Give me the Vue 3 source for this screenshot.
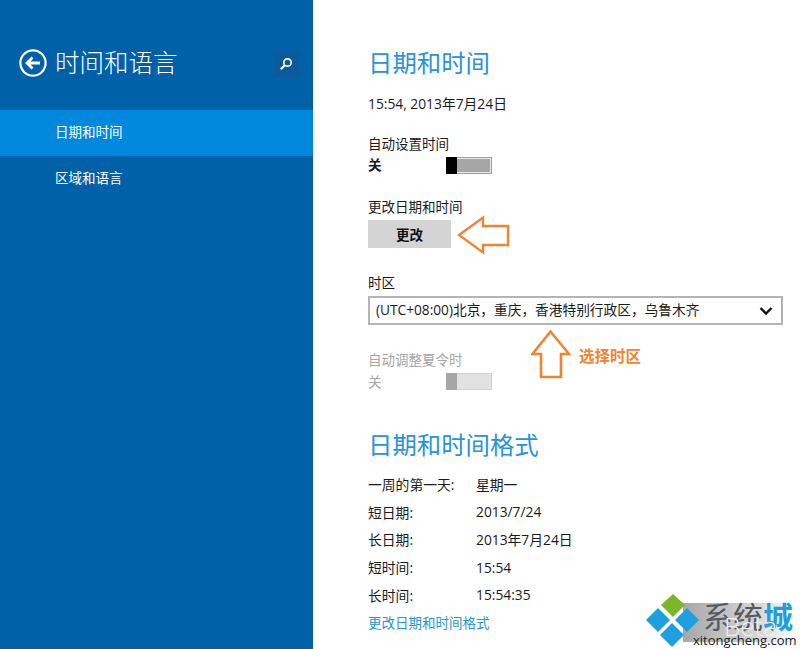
<script setup>
const formats = [
  { label: '一周的第一天:', value: '星期一' },
  { label: '短日期:', value: '2013/7/24' },
  { label: '长日期:', value: '2013年7月24日' },
  { label: '短时间:', value: '15:54' },
  { label: '长时间:', value: '15:54:35' },
]
</script>

<template>
  <div class="page">
    <aside class="side">
      <div class="side-head">
        <svg class="back" width="30" height="30" viewBox="0 0 30 30">
          <circle cx="15" cy="15" r="12.6" fill="none" stroke="#fff" stroke-width="2.2" />
          <path d="M22 15H9M14.5 9.5L9 15l5.500 5.500" fill="none" stroke="#fff" stroke-width="2.800" />
        </svg>
        <span class="side-title">时间和语言</span>
        <span class="search">
          <svg width="14" height="14" viewBox="0 0 14 14">
            <circle cx="8.500" cy="5.500" r="3.700" fill="none" stroke="#fff" stroke-width="1.700" />
            <path d="M6 8L1.800 12.200" stroke="#fff" stroke-width="2.200" />
          </svg>
        </span>
      </div>
      <div class="nav active">日期和时间</div>
      <div class="nav">区域和语言</div>
    </aside>

    <main class="main">
      <h1 class="h1">日期和时间</h1>
      <div class="now">15:54, 2013年7月24日</div>

      <div class="label auto">自动设置时间</div>
      <div class="toggle-row">
        <span class="off">关</span>
        <span class="toggle"><i class="thumb"></i></span>
      </div>

      <div class="label change">更改日期和时间</div>
      <button class="btn">更改</button>

      <div class="label zone">时区</div>
      <div class="select">
        <span>(UTC+08:00)北京，重庆，香港特别行政区，乌鲁木齐</span>
        <svg width="14" height="10" viewBox="0 0 14 10">
          <path d="M1.500 2L7 7.500 12.500 2" fill="none" stroke="#111" stroke-width="2.400" />
        </svg>
      </div>

      <div class="label dst muted">自动调整夏令时</div>
      <div class="toggle-row dst-row">
        <span class="off muted">关</span>
        <span class="toggle dim"><i class="thumb"></i></span>
      </div>

      <h1 class="h1 second">日期和时间格式</h1>
      <div class="formats">
        <div v-for="f in formats" :key="f.label" class="fmt">
          <span class="fmt-label">{{ f.label }}</span>
          <span>{{ f.value }}</span>
        </div>
      </div>
      <a class="link">更改日期和时间格式</a>
    </main>

    <svg class="arrow-left" width="54" height="40" viewBox="0 0 54 40">
      <path d="M2 20L26 2.500V11H51V30H26V37.500Z" fill="#fff" stroke="#ee8434" stroke-width="2.400" />
    </svg>
    <svg class="arrow-up" width="40" height="50" viewBox="0 0 40 50">
      <path d="M19.500 1.500L38 24H30V47H10V24H1.500Z" fill="#fff" stroke="#ee8434" stroke-width="2.600" />
    </svg>
    <span class="note">选择时区</span>

    <div class="mark">
      <span class="mark-shade"></span>
      <svg class="mark-logo" width="60" height="56" viewBox="0 0 60 56">
        <path d="M27 0L39 11 27 23 15 11Z" fill="#7ab829" />
        <path d="M12 14L24 26 12 38 0 26Z" fill="#1e9fe0" />
        <path d="M41 14L53 26 41 38 29 26Z" fill="#1e9fe0" />
        <path d="M26 29L38 41 26 53 14 41Z" fill="#1e9fe0" />
      </svg>
      <span class="mark-cn"><em>系统</em><b>城</b></span>
      <span class="mark-beta">Beta</span>
      <span class="mark-en">xitongcheng.com</span>
    </div>
  </div>
</template>

<style>
html, body { margin: 0; background: #fff; }
</style>

<style scoped>
.page {
  position: relative;
  display: flex;
  width: 800px;
  height: 649px;
  overflow: hidden;
  background: #fff;
  color: #1a1a1a;
  font-family: "Noto Sans CJK SC", "Open Sans", sans-serif;
  font-size: 13.500px;
}
.side {
  width: 313px;
  flex: none;
  background: #0060a8;
  color: #fff;
  padding-top: 45px;
  box-sizing: border-box;
}
.side-head {
  display: flex;
  align-items: center;
  height: 36px;
  margin-bottom: 29px;
  padding-left: 18px;
}
.side-title {
  margin-left: 7px;
  margin-top: -2px;
  font-size: 24.500px;
  font-weight: 300;
  line-height: 36px;
}
.search {
  display: flex;
  align-items: center;
  justify-content: center;
  width: 26px;
  height: 26px;
  margin-left: 95px;
  margin-top: 2px;
  background: #0a5a9c;
}
.nav {
  height: 46px;
  line-height: 42px;
  padding-left: 55px;
  font-size: 13.500px;
}
.nav.active { background: #0088dd; }
.main {
  flex: 1;
  padding-left: 55px;
  padding-top: 44px;
}
.h1 {
  margin: 0;
  color: #2a93d8;
  font-size: 24.400px;
  font-weight: 400;
  line-height: 36px;
}
.now {
  margin-top: 14px;
  line-height: 20px;
  font-family: "Open Sans", "Noto Sans CJK SC", sans-serif;
  font-size: 13.800px;
}
.label { line-height: 20px; }
.auto { margin-top: 19px; }
.toggle-row {
  display: flex;
  align-items: center;
  height: 24px;
}
.off { width: 78px; margin-top: -2px; font-weight: 700; }
.off.muted { margin-top: 0; font-weight: 400; }
.toggle {
  display: block;
  width: 44px;
  height: 15px;
  border: 1px solid #a0a0a0;
  background: #a6a6a6;
  box-shadow: inset 0 0 0 1px #e8e8e8;
}
.thumb {
  display: block;
  width: 11px;
  height: 17px;
  margin: -1px 0 0 -1px;
  background: #000;
}
.change { margin-top: 19px; }
.btn {
  display: block;
  width: 83px;
  height: 28px;
  margin-top: 4px;
  padding: 0;
  border: 0;
  background: #d4d4d4;
  color: #111;
  font: 700 13.500px "Noto Sans CJK SC", sans-serif;
}
.zone { margin-top: 24px; }
.select {
  display: flex;
  align-items: center;
  justify-content: space-between;
  box-sizing: border-box;
  width: 415px;
  height: 29px;
  margin-top: 4px;
  padding: 0 8px 0 6px;
  border: 2px solid #b4b4b4;
  line-height: 20px;
  font-family: "Open Sans", "Noto Sans CJK SC", sans-serif;
  font-size: 13.700px;
}
.select span { margin-top: -2px; }
.dst { margin-top: 24px; }
.muted { color: #a6a6a6; }
.toggle.dim { background: #e2e2e2; border-color: #d0d0d0; box-shadow: none; }
.toggle.dim .thumb { background: #a6a6a6; }
.second { margin-top: 33px; }
.formats {
  margin-top: 8px;
  font-family: "Open Sans", "Noto Sans CJK SC", sans-serif;
  font-size: 13.800px;
}
.fmt { display: flex; height: 27.750px; align-items: center; }
.fmt-label { width: 108px; }
.link {
  display: block;
  margin-top: 3px;
  line-height: 20px;
  color: #2a93d8;
}
.arrow-left { position: absolute; left: 457px; top: 215px; }
.arrow-up { position: absolute; left: 531px; top: 330px; }
.note {
  position: absolute;
  left: 579px;
  top: 345px;
  color: #ee8434;
  font-size: 15.500px;
  font-weight: 700;
  line-height: 20px;
}
.mark {
  position: absolute;
  left: 646px;
  top: 594px;
  width: 154px;
  height: 55px;
}
.mark-logo { position: absolute; left: 0; top: 0; }
.mark-shade {
  position: absolute;
  left: 37px;
  top: 9px;
  width: 112px;
  height: 39px;
  background: linear-gradient(90deg, rgba(110, 110, 110, 0.6), rgba(170, 170, 170, 0.45) 70%, rgba(255, 255, 255, 0));
}
.mark-cn {
  position: absolute;
  left: 57px;
  top: 4px;
  display: flex;
  font-size: 30px;
  line-height: 34px;
  font-weight: 400;
  letter-spacing: 0;
}
.mark-cn em { color: #555b60; font-style: normal; }
.mark-cn b { color: #1e9fe0; font-weight: 700; }
.mark-beta {
  position: absolute;
  left: 78px;
  top: 17px;
  color: #eee;
  font: 300 26px "Open Sans", sans-serif;
  line-height: 30px;
}
.mark-en {
  position: absolute;
  left: 47px;
  top: 37px;
  color: #222;
  font: 400 13px "Open Sans", sans-serif;
  line-height: 18px;
}
</style>
